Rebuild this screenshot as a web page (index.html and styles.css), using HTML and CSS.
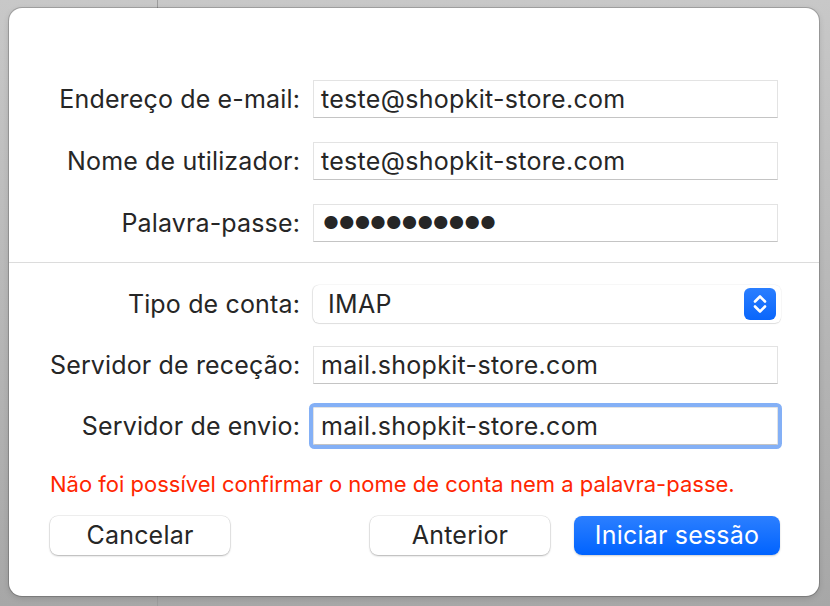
FILE: index.html
```html
<!DOCTYPE html>
<html lang="pt">
<head>
<meta charset="utf-8">
<link rel="stylesheet" href="styles.css">
</head>
<body>
<div class="sheet">
  <div class="section">
    <label class="lbl">Endereço de e-mail:</label>
    <div class="field">teste@shopkit-store.com</div>
    <label class="lbl">Nome de utilizador:</label>
    <div class="field">teste@shopkit-store.com</div>
    <label class="lbl">Palavra-passe:</label>
    <div class="field dots">●●●●●●●●●●●</div>
  </div>
  <div class="sep"></div>
  <div class="section second">
    <label class="lbl">Tipo de conta:</label>
    <div class="popup">
      <span>IMAP</span>
      <span class="stepper">
        <svg width="32" height="32" viewBox="0 0 32 32"><path d="M11 13.5 L16 8.5 L21 13.5 M11 18.5 L16 23.5 L21 18.5" fill="none" stroke="#fff" stroke-width="2.6" stroke-linecap="round" stroke-linejoin="round"/></svg>
      </span>
    </div>
    <label class="lbl">Servidor de receção:</label>
    <div class="field">mail.shopkit-store.com</div>
    <label class="lbl">Servidor de envio:</label>
    <div class="field focus">mail.shopkit-store.com</div>
  </div>
  <p class="error">Não foi possível confirmar o nome de conta nem a palavra-passe.</p>
  <div class="buttons">
    <button class="btn">Cancelar</button>
    <span class="spacer"></span>
    <button class="btn">Anterior</button>
    <button class="btn primary">Iniciar sessão</button>
  </div>
</div>
</body>
</html>
```
FILE: styles.css
```css
html, body { margin: 0; padding: 0; }
body {
  width: 830px;
  height: 606px;
  overflow: hidden;
  background:
    linear-gradient(to right, transparent 157px, #9c9c9c 157px, #9c9c9c 158px, transparent 158px),
    linear-gradient(#c8c8c8, #a7a7a7);
  font-family: "Inter", "Liberation Sans", sans-serif;
  color: #262626;
  padding-top: 8px;
  padding-left: 9px;
  box-sizing: border-box;
}
.sheet {
  width: 810px;
  height: 588px;
  background: #fff;
  border-radius: 13px;
  box-shadow: 0 0 0 1px rgba(0,0,0,0.18), 0 2px 6px rgba(0,0,0,0.15);
  box-sizing: border-box;
  padding: 72px 39px 0 41px;
  display: flex;
  flex-direction: column;
}
.section {
  display: grid;
  grid-template-columns: 250px 465px;
  column-gap: 13px;
  row-gap: 24px;
  align-items: center;
}
.second { row-gap: 23px; }
.lbl {
  text-align: right;
  font-size: 25px;
  letter-spacing: 0.15px;
  white-space: nowrap;
}
.field {
  height: 38px;
  box-sizing: border-box;
  border: 1px solid #e3e3e3;
  border-bottom-color: #c4c4c4;
  padding: 0 7px;
  font-size: 25px;
  letter-spacing: 0.3px;
  line-height: 36px;
  white-space: nowrap;
}
.dots { font-size: 17.5px; letter-spacing: -0.3px; padding-left: 9px; }
.focus {
  border-radius: 2px;
  box-shadow: 0 0 0 4px #84b0f6;
}
.sep {
  height: 1px;
  background: #dcdcdc;
  margin: 20px -39px 22px -41px;
}
.popup {
  height: 38px;
  width: 468px;
  box-sizing: border-box;
  border-radius: 6px;
  background: #fff;
  box-shadow: -1px 0 1px rgba(0,0,0,0.08), 0 1px 1px rgba(0,0,0,0.1), 0 0 0 0.5px rgba(0,0,0,0.05);
  display: flex;
  align-items: center;
  justify-content: space-between;
  padding: 0 5px 0 15px;
  font-size: 25px;
  letter-spacing: 0.3px;
}
.stepper {
  width: 32px;
  height: 32px;
  border-radius: 6px;
  background: linear-gradient(#2a7eff, #0a66fb);
  display: flex;
}
.error {
  margin: 27px 0 0 0;
  color: #ff2600;
  font-size: 22px;
  line-height: 24px;
  white-space: nowrap;
}
.buttons {
  display: flex;
  align-items: center;
  gap: 24px;
  margin-top: 20px;
}
.spacer { flex: 1; }
.btn {
  width: 180px;
  height: 39px;
  border: none;
  border-radius: 8px;
  background: #fff;
  box-shadow: 0 0 0 0.5px rgba(0,0,0,0.12), 0 1px 2px rgba(0,0,0,0.25);
  font-family: inherit;
  font-size: 25px;
  letter-spacing: 0.2px;
  color: #262626;
  padding: 0 0 2px;
}
.primary {
  width: 206px;
  color: #fff;
  background: linear-gradient(#2c7fff, #0063ff);
  box-shadow: 0 1px 2px rgba(0,0,0,0.2);
}
```
